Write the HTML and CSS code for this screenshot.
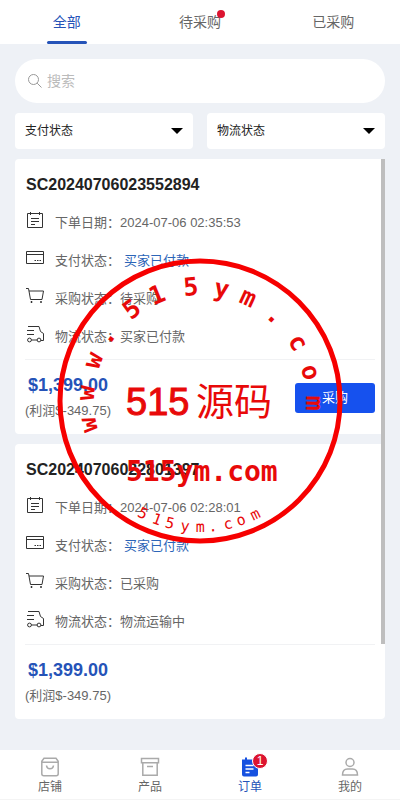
FILE: index.html
```html
<!DOCTYPE html>
<html lang="zh-CN">
<head>
<meta charset="utf-8">
<meta name="viewport" content="width=device-width, initial-scale=1">
<title>订单</title>
<link rel="stylesheet" href="styles.css">
</head>
<body>
<svg class="sprite" aria-hidden="true">
  <symbol id="i-date" viewBox="0 0 20 20"><path d="M2.500 3.500h15v14h-15zM5.500 2v3M14.500 2v3"/><path d="M6 8.500h8M6 11.500h8M6 14.500h4"/></symbol>
  <symbol id="i-card" viewBox="0 0 20 20"><path d="M1.500 3.500h17v12h-17zM1.500 6.500h17"/><path d="M9.500 12.500h1.500M12 12.500h1.500M14.500 12.500H16"/></symbol>
  <symbol id="i-cart" viewBox="0 0 20 20"><path d="M1 2.500h2.500L5.500 13.500h11.500L18.500 5H4"/><path d="M6 15.500h1v1H6zM15.500 15.500h1v1h-1z"/></symbol>
  <symbol id="i-truck" viewBox="0 0 20 20"><path d="M3 2.500h11l1.500 5 3 2v7h-2.500M6.300 16h6M2 6.500h7M2 10.500h7"/><circle cx="4.500" cy="16" r="1.900"/><circle cx="14" cy="16" r="1.900"/></symbol>
</svg>
<div class="app">
  <nav class="tabs" aria-label="采购状态">
    <a class="tab active" href="#all">全部</a>
    <a class="tab" href="#pending"><span class="tab-text">待采购<i class="dot"></i></span></a>
    <a class="tab" href="#done">已采购</a>
  </nav>

  <main class="content">
    <label class="search">
      <svg viewBox="0 0 16 16" aria-hidden="true"><circle cx="6.500" cy="6.500" r="5"/><path d="M10.200 10.200l4.300 4.300"/></svg>
      <input type="search" placeholder="搜索" aria-label="搜索">
    </label>

    <div class="filters">
      <div class="filter">
        <select aria-label="支付状态"><option>支付状态</option></select>
        <svg viewBox="0 0 12 6" aria-hidden="true"><path d="M0 0h12L6 6z"/></svg>
      </div>
      <div class="filter">
        <select aria-label="物流状态"><option>物流状态</option></select>
        <svg viewBox="0 0 12 6" aria-hidden="true"><path d="M0 0h12L6 6z"/></svg>
      </div>
    </div>

    <section class="orders">
      <article class="card">
        <h2>SC20240706023552894</h2>
        <div class="row"><svg><use href="#i-date"/></svg><span>下单日期：</span><span>2024-07-06 02:35:53</span></div>
        <div class="row"><svg><use href="#i-card"/></svg><span>支付状态：</span><span class="paid">买家已付款</span></div>
        <div class="row"><svg><use href="#i-cart"/></svg><span>采购状态：</span><span>待采购</span></div>
        <div class="row"><svg><use href="#i-truck"/></svg><span>物流状态：</span><span>买家已付款</span></div>
        <div class="summary">
          <div><div class="price">$1,399.00</div><div class="profit">(利润$-349.75)</div></div>
          <button class="buy" type="button">采购</button>
        </div>
      </article>
      <article class="card">
        <h2>SC20240706022801397</h2>
        <div class="row"><svg><use href="#i-date"/></svg><span>下单日期：</span><span>2024-07-06 02:28:01</span></div>
        <div class="row"><svg><use href="#i-card"/></svg><span>支付状态：</span><span class="paid">买家已付款</span></div>
        <div class="row"><svg><use href="#i-cart"/></svg><span>采购状态：</span><span>已采购</span></div>
        <div class="row"><svg><use href="#i-truck"/></svg><span>物流状态：</span><span>物流运输中</span></div>
        <div class="summary">
          <div><div class="price">$1,399.00</div><div class="profit">(利润$-349.75)</div></div>
        </div>
      </article>
      <div class="thumb"></div>
    </section>
  </main>

  <nav class="bottom" aria-label="主导航">
    <a href="#shop"><svg viewBox="0 0 20 20"><path d="M4 1.200h12l2.200 3v12.500a2 2 0 0 1-2 2H3.800a2 2 0 0 1-2-2V4.200zM2 5.200h16M6.500 8.500c.5 4.300 6.500 4.300 7 0"/></svg>店铺</a>
    <a href="#products"><svg viewBox="0 0 20 20"><path d="M1.500 1.500h17v4.200h-17zM2.800 5.700h14.400v12.500H2.800zM7 9.500h6"/></svg>产品</a>
    <a class="active" href="#orders"><span class="icon-wrap"><svg viewBox="0 0 20 20"><path class="fill" d="M2 2.500h3v-2h2v2h6v-2h2v2h3v15a2 2 0 0 1-2 2H4a2 2 0 0 1-2-2z"/><path class="lines" d="M5.500 8.500h8M5.500 12h8M5.500 15.500h4"/></svg><b class="badge">1</b></span>订单</a>
    <a href="#me"><svg viewBox="0 0 20 20"><circle cx="10" cy="5.500" r="4"/><path d="M2.500 18c0-4.500 2-6 5-6h5c3 0 5 1.500 5 6z"/></svg>我的</a>
  </nav>

  <svg class="stamp" viewBox="57 257 286 286">
    <defs>
      <path id="arc-top" d="M200 506A106 106 0 0 1 200 294A106 106 0 0 1 200 506"/>
      <path id="arc-bottom" d="M69 400A131 131 0 0 0 331 400"/>
    </defs>
    <circle cx="200" cy="400" r="140"/>
    <text class="stamp-top" x="144 174 205 231 265 292 324 353 379 409 442 472 501"><textPath href="#arc-top">www.515ym.com</textPath></text>
    <text class="stamp-name" x="126" y="414">515<tspan class="stamp-cjk" x="196">源码</tspan></text>
    <text class="stamp-site" x="126" y="480">515ym.com</text>
    <text class="stamp-bottom" x="144 160 174 190 206 219 235 249 265"><textPath href="#arc-bottom">515ym.com</textPath></text>
  </svg>
</div>
</body>
</html>
```
FILE: styles.css
```css
* { box-sizing: border-box; }

body {
  margin: 0;
  background: #eef1f6;
  color: #666;
  font: 400 13px/26px "Liberation Sans", "Noto Sans CJK SC", sans-serif;
}

a { color: inherit; text-decoration: none; }

.sprite { position: absolute; width: 0; height: 0; }

.app {
  position: relative;
  display: flex;
  flex-direction: column;
  min-height: 100vh;
}

.tabs { display: flex; height: 44px; background: #fff; }

.tab {
  position: relative;
  flex: 1;
  font-size: 14px;
  line-height: 44px;
  text-align: center;
}

.tab.active { color: #2553b8; }

.tab.active::after {
  content: "";
  position: absolute;
  left: 50%;
  bottom: 0;
  width: 40px;
  height: 3px;
  margin-left: -20px;
  border-radius: 2px;
  background: #2553b8;
}

.tab-text { position: relative; }

.dot {
  position: absolute;
  top: -4px;
  right: -4px;
  width: 8px;
  height: 8px;
  border-radius: 50%;
  background: #dc1430;
}

.content {
  flex: 1;
  display: flex;
  flex-direction: column;
  gap: 10px;
  padding: 15px 15px 0;
}

.search {
  display: flex;
  align-items: center;
  gap: 4px;
  height: 44px;
  padding: 0 12px;
  border-radius: 22px;
  background: #fff;
}

.search svg { width: 16px; height: 16px; fill: none; stroke: #999; stroke-width: 1; }

.search input {
  flex: 1;
  min-width: 0;
  padding: 0;
  border: 0;
  outline: 0;
  background: none;
  color: #333;
  font: inherit;
  font-size: 14px;
}

.search input::placeholder { color: #bbb; }

.filters { display: grid; grid-template-columns: 1fr 1fr; gap: 14px; }

.filter { position: relative; }

.filter select {
  display: block;
  width: 100%;
  height: 36px;
  padding: 0 10px;
  border: 0;
  border-radius: 4px;
  appearance: none;
  background: #fff;
  color: #222;
  font: inherit;
  font-size: 12px;
}

.filter svg {
  position: absolute;
  top: 15px;
  right: 10px;
  width: 12px;
  height: 6px;
  pointer-events: none;
}

.orders {
  position: relative;
  flex: 1;
  display: flex;
  flex-direction: column;
  gap: 10px;
  padding-bottom: 31px;
}

.thumb {
  position: absolute;
  top: 0;
  right: 0;
  width: 4px;
  height: 82%;
  background: #bebebe;
}

.card { padding: 7px 10px 10px; border-radius: 4px; background: #fff; }

.card h2 {
  margin: 0;
  padding-left: 1px;
  color: #222;
  font-size: 16px;
  font-weight: 700;
  line-height: 38px;
}

.row { display: flex; align-items: center; height: 38px; }

.row svg {
  width: 20px;
  height: 20px;
  margin: 0 10px 6px 0;
  fill: none;
  stroke: #333;
  stroke-width: 1;
}

.paid { margin-left: 4px; color: #2c65b8; }

.summary {
  display: flex;
  align-items: center;
  justify-content: space-between;
  margin-top: 3px;
  padding-top: 12px;
  border-top: 1px solid #f1f2f4;
}

.price {
  padding-left: 3px;
  color: #2553b8;
  font-size: 18px;
  font-weight: 700;
}

.buy {
  width: 80px;
  height: 30px;
  padding: 0;
  border: 0;
  border-radius: 3px;
  background: #1651ee;
  color: #fff;
  font: inherit;
}

.bottom {
  display: flex;
  height: 50px;
  border-bottom: 1px solid #f4f4f4;
  background: #fff;
}

.bottom a {
  flex: 1;
  display: flex;
  flex-direction: column;
  align-items: center;
  padding-top: 7px;
  font-size: 12px;
  line-height: 20px;
}

.bottom svg {
  display: block;
  width: 20px;
  height: 20px;
  fill: none;
  stroke: #aaa;
  stroke-width: 1.5;
}

.bottom .active { color: #2553b8; }
.bottom .fill { fill: #1651e0; stroke: none; }
.bottom .lines { stroke: #fff; }
.icon-wrap { position: relative; }

.badge {
  position: absolute;
  top: -4px;
  right: -8px;
  width: 16px;
  height: 16px;
  border: 1px solid #fff;
  border-radius: 50%;
  background: #dc1430;
  color: #fff;
  font-size: 12px;
  font-weight: 400;
  line-height: 14px;
  text-align: center;
}

.stamp {
  position: absolute;
  top: 258px;
  left: 50%;
  width: 286px;
  height: 286px;
  margin-left: -143px;
  pointer-events: none;
}

.stamp circle { fill: none; stroke: #f60000; stroke-width: 5; }
.stamp text { fill: #e80909; font-family: "DejaVu Sans Mono", monospace; }
.stamp .stamp-top { font-size: 25px; font-weight: 700; text-anchor: middle; }
.stamp .stamp-name { font-family: "Liberation Sans", sans-serif; font-size: 38px; font-weight: 400; stroke: #e80909; }
.stamp .stamp-cjk { font-family: "Noto Sans CJK SC", sans-serif; font-size: 38px; stroke: none; }
.stamp .stamp-site { font-size: 28px; font-weight: 700; }
.stamp .stamp-bottom { font-size: 15px; font-weight: 400; text-anchor: middle; }
```
